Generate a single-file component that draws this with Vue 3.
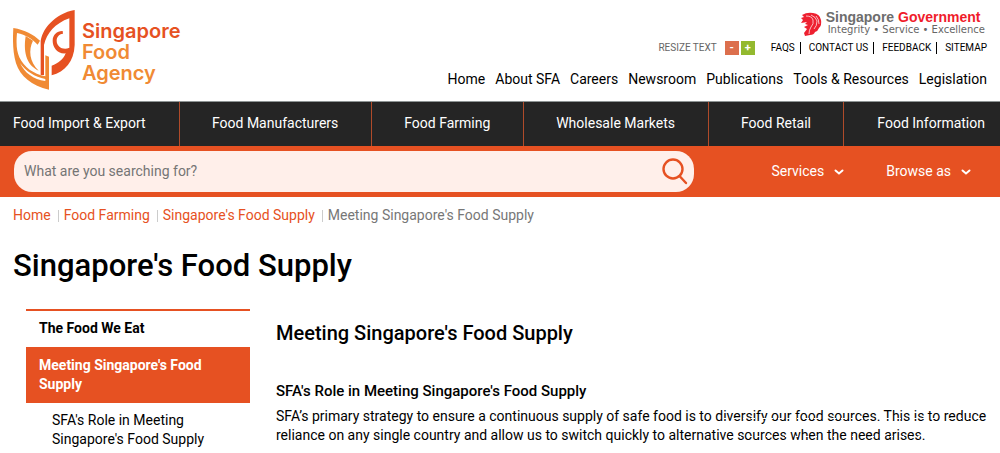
<script setup>
const topLinks = ['FAQS', 'CONTACT US', 'FEEDBACK', 'SITEMAP']
const siteLinks = ['Home', 'About SFA', 'Careers', 'Newsroom', 'Publications', 'Tools & Resources', 'Legislation']
const sections = ['Food Import & Export', 'Food Manufacturers', 'Food Farming', 'Wholesale Markets', 'Food Retail', 'Food Information']
const menus = ['Services', 'Browse as']
const crumbs = ['Home', 'Food Farming', "Singapore's Food Supply"]
</script>

<template>
  <div class="page">
    <header class="masthead">
      <a class="brand" href="#">
        <svg class="leaves" viewBox="39 30 186 240" aria-hidden="true">
          <path fill="#f08a34" d="M40 84C75 90 100 103 120 122L113 134C95 115 78 105 51 99C48 135 50 152 58 172C72 202 100 222 136 229V166L147 170V269C95 258 60 228 48 190C38 155 38 120 40 84Z" />
          <path fill="#fff" d="M60 189C78 214 104 231 136 237V243C100 238 74 219 60 189Z" />
          <path fill="#f08a34" d="M77 108L99 122C85 150 88 185 116 212C85 198 68 165 77 108Z" />
          <path fill="#e65122" d="M224 30V135C222 185 195 215 155 226V197C175 190 190 178 197 160C170 162 158 140 158 122C158 104 172 92 188 93L189 101C176 102 170 112 170 122C170 140 190 152 208 143V55C165 70 140 100 132 135V225H122V130C122 90 165 40 224 30Z" />
        </svg>
        <span class="brand-name">
          <span class="brand-lead">Singapore</span>
          <span>Food</span>
          <span>Agency</span>
        </span>
      </a>
      <div class="head-right">
        <a class="gov" href="#">
          <svg class="lion" viewBox="0 0 21 24" aria-hidden="true">
            <path fill="#ee2030" d="M1 3Q6 0 12 1Q19 2 20 8Q21 13 18 16Q17 19 14 20Q13 23 9 23L4 24L3 21L6 17L3 15L7 13L4 12L6 10L0 11L2 8L0 6L3 5Z" />
            <path fill="none" stroke="#fff" stroke-width=".7" d="M5 4Q11 4 12 8Q13 12 10 15Q8 18 8 22M10 3Q15 5 16 9Q16 14 13 17M15 4Q18 7 18 12" />
          </svg>
          <span class="gov-text">
            <span class="gov-name">Singapore <b>Government</b></span>
            <span class="gov-motto">Integrity • Service • Excellence</span>
          </span>
        </a>
        <div class="tools">
          <span class="resize">RESIZE TEXT</span>
          <button class="size minus" type="button" aria-label="Smaller text">-</button>
          <button class="size plus" type="button" aria-label="Larger text">+</button>
          <ul class="top-links">
            <li v-for="l in topLinks" :key="l"><a href="#">{{ l }}</a></li>
          </ul>
        </div>
        <nav class="site-links">
          <a v-for="l in siteLinks" :key="l" href="#">{{ l }}</a>
        </nav>
      </div>
    </header>

    <nav class="sections">
      <a v-for="s in sections" :key="s" href="#">{{ s }}</a>
    </nav>

    <div class="search-bar">
      <form class="search" @submit.prevent>
        <input type="text" placeholder="What are you searching for?" aria-label="Search" />
        <button type="submit" aria-label="Search">
          <svg viewBox="0 0 26 26" aria-hidden="true">
            <circle cx="11" cy="10" r="9.5" />
            <path d="M17.5 17L24 24" />
          </svg>
        </button>
      </form>
      <div class="menus">
        <button v-for="m in menus" :key="m" type="button">
          {{ m }}
          <svg viewBox="0 0 10 8" aria-hidden="true"><path d="M1.5 2.5L5 5.5L8.5 2.5" /></svg>
        </button>
      </div>
    </div>

    <nav class="crumbs" aria-label="Breadcrumb">
      <a v-for="c in crumbs" :key="c" href="#">{{ c }}</a>
      <span>Meeting Singapore's Food Supply</span>
    </nav>

    <h1>Singapore's Food Supply</h1>

    <div class="body">
      <nav class="side">
        <a class="side-item" href="#">The Food We Eat</a>
        <a class="side-item active" href="#">Meeting Singapore's Food Supply</a>
        <a class="side-sub" href="#">SFA's Role in Meeting Singapore's Food Supply</a>
      </nav>
      <main>
        <h2>Meeting Singapore's Food Supply</h2>
        <h3>SFA's Role in Meeting Singapore's Food Supply</h3>
        <div class="copy">
          <p>SFA’s primary strategy to ensure a continuous supply of safe food is to diversify our food sources. This is to reduce reliance on any single country and allow us to switch quickly to alternative sources when the need arises.</p>
          <svg class="flecks" viewBox="0 0 256 30" aria-hidden="true">
            <path d="M0 7.5H256" stroke-dasharray="4 5 6 4 3 5" />
            <path d="M4 25.5H196" stroke-dasharray="5 5 3 6" />
          </svg>
        </div>
      </main>
    </div>
  </div>
</template>

<style>
body { background: #fff; }
</style>

<style scoped>
.page { overflow: hidden; font-family: Roboto, "Liberation Sans", sans-serif; font-size: 14px; line-height: 19px; color: #000; }
a { color: inherit; text-decoration: none; }
button { font: inherit; border: 0; padding: 0; background: none; color: inherit; cursor: pointer; }
ul { list-style: none; margin: 0; padding: 0; }

.masthead { display: flex; justify-content: space-between; padding: 10px 13px 11px; }
.brand { display: flex; gap: 7px; }
.leaves { width: 62px; height: 80px; }
.brand-name { display: flex; flex-direction: column; padding-top: 11px; font: 600 20px/21px Inter, sans-serif; color: #f08a34; }
.brand-lead { color: #e65122; }

.head-right { display: flex; flex-direction: column; align-items: flex-end; }
.gov { display: flex; gap: 4px; margin-right: 2px; height: 28px; }
.lion { width: 21px; height: 24px; margin-top: 2px; }
.gov-text { display: flex; flex-direction: column; }
.gov-name { font: 700 14px/14px "Liberation Sans", sans-serif; color: #6d6d6d; }
.gov-name b { color: #f01c2b; }
.gov-motto { padding-left: 2px; font: 10px/12px "DejaVu Sans", sans-serif; color: #666; }

.tools { display: flex; align-items: center; height: 20px; font-size: 10px; line-height: 12px; }
.resize { margin-right: 8px; color: #666; }
.size { width: 14px; height: 14px; margin-right: 2px; color: #fff; font-weight: 700; font-size: 11px; line-height: 12px; }
.minus { background: #dc6f4d; }
.plus { background: #93b92f; }
.top-links { display: flex; margin-left: 14px; }
.top-links li + li { margin-left: 5px; padding-left: 9px; background: linear-gradient(#000, #000) 0 0 / 1px 100% no-repeat; }

.site-links { display: flex; gap: 10px; margin-top: 12px; }

.sections { display: flex; background: #252525; border-top: 1px solid #8e9494; color: #fff; }
.sections a { flex: 1 0 auto; padding: 12px 32px 13px; text-align: center; white-space: nowrap; border-right: 1px solid #b04b2a; }
.sections a:first-child { padding-left: 13px; text-align: left; }
.sections a:last-child { padding-right: 15px; text-align: right; border: 0; }

.search-bar { display: flex; align-items: center; padding: 5px 29px 5px 14px; background: #e65122; }
.search { display: flex; align-items: center; flex: 0 1 680px; height: 41px; border-radius: 18px; background: #ffefea; }
.search input { flex: 1; min-width: 0; padding: 0 10px; border: 0; outline: 0; background: none; font: inherit; }
.search input::placeholder { color: #757575; opacity: 1; }
.search button { width: 26px; height: 26px; margin-right: 6px; }
.search svg { display: block; overflow: visible; fill: none; stroke: #e65122; stroke-width: 2.4; stroke-linecap: round; }
.menus { display: flex; flex: 1; justify-content: flex-end; gap: 42px; color: #fff; }
.menus button { display: flex; align-items: center; gap: 10px; }
.menus svg { width: 10px; height: 8px; fill: none; stroke: #fff; stroke-width: 2; stroke-linecap: round; }

.crumbs { display: flex; padding: 9px 13px 0; color: #e65122; }
.crumbs span { color: #777; }
.crumbs > * + * { margin-left: 7px; padding-left: 6px; background: linear-gradient(#ccc, #ccc) 0 4px / 1px 12px no-repeat; }

h1 { margin: 21px 13px 0; font-size: 31px; line-height: 40px; font-weight: 500; }

.body { display: flex; gap: 26px; padding: 23px 12px 0 26px; }
.side { flex: 0 0 224px; border-top: 2px solid #e65122; }
.side a { display: block; }
.side-item { padding: 8px 13px 9px; font-weight: 700; }
.side .active { padding: 9px 26px 9px 13px; background: #e65122; color: #fff; }
.side .side-sub { padding: 8px 26px 0; }
main { flex: 1; min-width: 0; }
h2 { margin: 12px 0 0; font-size: 20px; line-height: 24px; font-weight: 500; }
h3 { margin: 36px 0 0; font-size: 15px; line-height: 20px; font-weight: 500; }
.copy { position: relative; margin-top: 6px; }
p { margin: 0; }
.flecks { position: absolute; top: 4px; left: 448px; width: 256px; height: 30px; fill: none; stroke: #fff; stroke-width: 1; pointer-events: none; }
</style>
